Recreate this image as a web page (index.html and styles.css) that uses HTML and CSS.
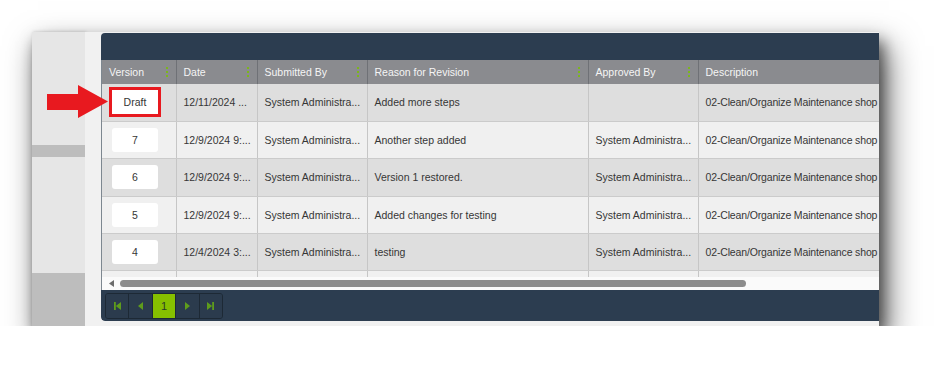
FILE: index.html
```html
<!DOCTYPE html>
<html lang="en">
<head>
<meta charset="UTF-8">
<meta name="viewport" content="width=device-width, initial-scale=1.0">
<title>Version History</title>
<link rel="stylesheet" href="styles.css">
</head>
<body>

<div class="shot">
    <div class="sidebar">
        <div class="side-top"></div>
        <div class="side-band"></div>
        <div class="side-mid"></div>
        <div class="side-bottom"></div>
    </div>
    <div class="gutter"></div>
    <div class="main">
        <div class="panel">
            <div class="panel-head"></div>
            <div class="table-clip">
                <table class="grid">
                    <colgroup>
                        <col style="width: 74px">
                        <col style="width: 81px">
                        <col style="width: 110px">
                        <col style="width: 221px">
                        <col style="width: 110px">
                        <col style="width: 260px">
                    </colgroup>
                    <thead>
                        <tr>
                            <th><div class="th-in">Version<span class="grip"></span></div></th>
                            <th><div class="th-in">Date<span class="grip"></span></div></th>
                            <th><div class="th-in">Submitted By<span class="grip"></span></div></th>
                            <th><div class="th-in">Reason for Revision<span class="grip"></span></div></th>
                            <th><div class="th-in">Approved By<span class="grip"></span></div></th>
                            <th><div class="th-in">Description</div></th>
                        </tr>
                    </thead>
                    <tbody>
                        <tr class="dark">
                            <td class="ver"><span class="ver-btn draft">Draft</span></td>
                            <td>12/11/2024 ...</td>
                            <td>System Administra...</td>
                            <td>Added more steps</td>
                            <td></td>
                            <td class="desc">02-Clean/Organize Maintenance shop</td>
                        </tr>
                        <tr>
                            <td class="ver"><span class="ver-btn">7</span></td>
                            <td>12/9/2024 9:...</td>
                            <td>System Administra...</td>
                            <td>Another step added</td>
                            <td>System Administra...</td>
                            <td class="desc">02-Clean/Organize Maintenance shop</td>
                        </tr>
                        <tr class="dark">
                            <td class="ver"><span class="ver-btn">6</span></td>
                            <td>12/9/2024 9:...</td>
                            <td>System Administra...</td>
                            <td>Version 1 restored.</td>
                            <td>System Administra...</td>
                            <td class="desc">02-Clean/Organize Maintenance shop</td>
                        </tr>
                        <tr>
                            <td class="ver"><span class="ver-btn">5</span></td>
                            <td>12/9/2024 9:...</td>
                            <td>System Administra...</td>
                            <td>Added changes for testing</td>
                            <td>System Administra...</td>
                            <td class="desc">02-Clean/Organize Maintenance shop</td>
                        </tr>
                        <tr class="dark">
                            <td class="ver"><span class="ver-btn">4</span></td>
                            <td>12/4/2024 3:...</td>
                            <td>System Administra...</td>
                            <td>testing</td>
                            <td>System Administra...</td>
                            <td class="desc">02-Clean/Organize Maintenance shop</td>
                        </tr>
                        <!-- next row, only its top edge shows above the scroll bar -->
                        <tr>
                            <td class="ver"><span class="ver-btn"></span></td>
                            <td></td>
                            <td></td>
                            <td></td>
                            <td></td>
                            <td></td>
                        </tr>
                    </tbody>
                </table>
            </div>
            <div class="hscroll">
                <svg class="hs-arrow" width="5" height="7" viewBox="0 0 5 7"><polygon points="5,0 0,3.5 5,7" fill="#6b6b6b"/></svg>
                <div class="hs-thumb"></div>
            </div>
            <div class="pager-bar">
                <div class="pager">
                    <span class="pg-btn">
                        <svg width="7" height="8" viewBox="0 0 7 8"><rect x="0" y="0" width="1.8" height="8" fill="#5e9c1c"/><polygon points="7,0 1.8,4 7,8" fill="#5e9c1c"/></svg>
                    </span>
                    <span class="pg-btn">
                        <svg width="5" height="8" viewBox="0 0 5 8"><polygon points="5,0 0,4 5,8" fill="#5e9c1c"/></svg>
                    </span>
                    <span class="pg-btn active">1</span>
                    <span class="pg-btn">
                        <svg width="5" height="8" viewBox="0 0 5 8"><polygon points="0,0 5,4 0,8" fill="#5e9c1c"/></svg>
                    </span>
                    <span class="pg-btn">
                        <svg width="7" height="8" viewBox="0 0 7 8"><polygon points="0,0 5.2,4 0,8" fill="#5e9c1c"/><rect x="5.2" y="0" width="1.8" height="8" fill="#5e9c1c"/></svg>
                    </span>
                </div>
            </div>
        </div>
    </div>
    <!-- annotation arrow pointing at the draft version -->
    <svg class="arrow" width="62" height="33" viewBox="0 0 62 33">
        <polygon points="0,9 31,9 31,0 61,16.5 31,33 31,25 0,25" fill="#e8191f"/>
    </svg>
</div>

</body>
</html>
```

FILE: styles.css
```css
body {
    margin: 0;
    background-color: #fff;
    font-family: "Liberation Sans", Arial, sans-serif;
}

.shot {
    position: relative;
    display: flex;
    width: 847px;
    height: 294px;
    margin: 32px 0 0 32px;
    background-color: #f1f1f1;
    box-shadow: 4px 9px 14px rgba(0, 0, 0, 0.55), 8px 16px 30px 2px rgba(0, 0, 0, 0.5);
}

/* left navigation strip */
.sidebar {
    width: 53px;
    display: flex;
    flex-direction: column;
    background-color: #e6e6e6;
    box-shadow: 1px 0 3px rgba(0, 0, 0, 0.18);
}
.side-top {
    height: 113px;
}
.side-band {
    height: 12px;
    background-color: #bdbdbd;
}
.side-mid {
    height: 116px;
}
.side-bottom {
    flex: 1;
    background-color: #bdbdbd;
}

.gutter {
    width: 16px;
    background-color: #f1f1f1;
}

.main {
    flex: 1;
    min-width: 0;
    padding-top: 1px;
    background-color: #f1f1f1;
}

.panel {
    display: flex;
    flex-direction: column;
    height: 288px;
    overflow: hidden;
    border-radius: 4px 0 0 4px;
}
.panel-head {
    height: 27px;
    background-color: #2c3d50;
}

.table-clip {
    height: 217px;
    overflow: hidden;
    border-left: 1px solid #7d8790;
    background-color: #f0f0f0;
}

.grid {
    border-collapse: collapse;
    table-layout: fixed;
    width: 856px;
    font-size: 10.5px;
}
.grid th {
    height: 24px;
    padding: 0;
    background-color: #8a8b8f;
    color: #f5f5f5;
    font-weight: normal;
    text-align: left;
    border-right: 1px solid #6f7176;
}
.th-in {
    display: flex;
    align-items: center;
    justify-content: space-between;
    padding: 0 8px 0 7px;
}
.grip {
    width: 2px;
    height: 2px;
    margin-top: -8px;
    background-color: #7cb61c;
    box-shadow: 0 4px 0 #7cb61c, 0 8px 0 #7cb61c;
}

.grid td {
    height: 37.4px;
    padding: 0 0 0 7px;
    box-sizing: border-box;
    color: #363636;
    white-space: nowrap;
    overflow: hidden;
    border-right: 1px solid #c6c6c6;
    border-bottom: 1px solid #cbcbcb;
}
.grid td.desc {
    letter-spacing: -0.15px;
}
.grid tr {
    background-color: #f0f0f0;
}
.grid tr.dark {
    background-color: #dedede;
}
.grid td.ver {
    padding-left: 10px;
}
.ver-btn {
    display: inline-block;
    width: 46px;
    height: 24px;
    line-height: 24px;
    text-align: center;
    background-color: #fff;
    border-radius: 3px;
    vertical-align: middle;
}
.ver-btn.draft {
    border-radius: 0;
    outline: 3px solid #e8191f;
}

/* horizontal scroll bar under the grid */
.hscroll {
    display: flex;
    align-items: center;
    gap: 6px;
    height: 13px;
    padding-left: 7px;
    background-color: #fafafa;
    border-left: 1px solid #7d8790;
}
.hs-thumb {
    width: 626px;
    height: 7px;
    border-radius: 4px;
    background-color: #8c8c8c;
}

.pager-bar {
    flex: 1;
    padding: 3px 0 0 4px;
    background-color: #2c3d50;
    border-radius: 0 0 0 4px;
}
.pager {
    display: inline-flex;
    height: 24px;
    border: 1px solid #1d2935;
    border-radius: 3px;
    overflow: hidden;
}
.pg-btn {
    display: flex;
    align-items: center;
    justify-content: center;
    width: 22.4px;
    border-right: 1px solid #1d2935;
    background-color: #2b3b4d;
    font-size: 11px;
    color: #2b3b2b;
}
.pg-btn:last-child {
    border-right: none;
}
.pg-btn.active {
    background-color: #86c000;
}

.arrow {
    position: absolute;
    left: 15px;
    top: 53px;
}
```
